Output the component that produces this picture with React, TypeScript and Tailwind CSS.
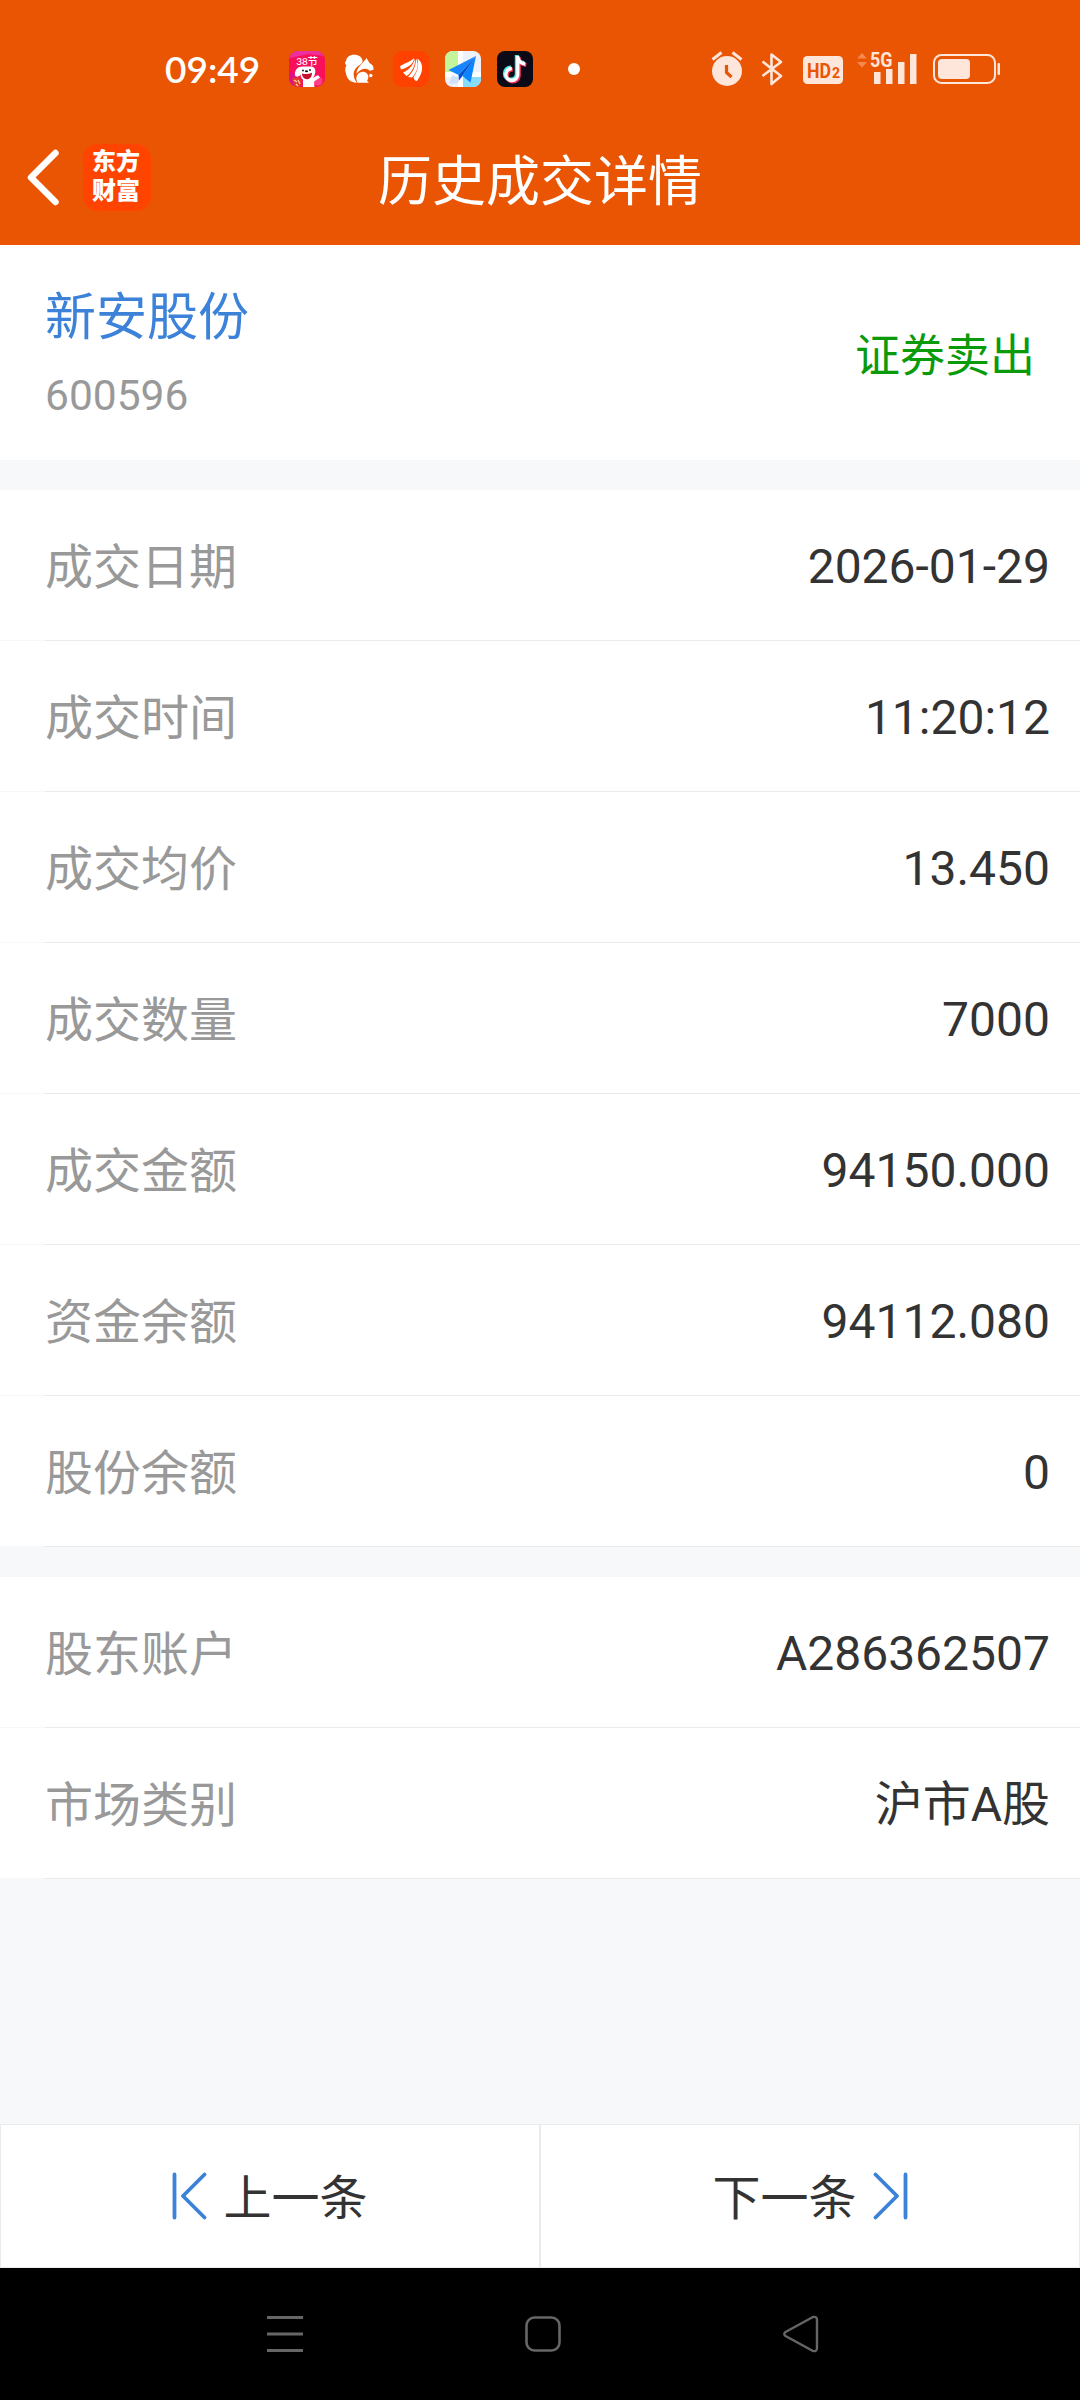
import type { ReactNode } from 'react'

interface DetailItem {
  label: string
  value: string
}

const TRADE: DetailItem[] = [
  { label: '成交日期', value: '2026-01-29' },
  { label: '成交时间', value: '11:20:12' },
  { label: '成交均价', value: '13.450' },
  { label: '成交数量', value: '7000' },
  { label: '成交金额', value: '94150.000' },
  { label: '资金余额', value: '94112.080' },
  { label: '股份余额', value: '0' },
]

const ACCOUNT: DetailItem[] = [
  { label: '股东账户', value: 'A286362507' },
  { label: '市场类别', value: '沪市A股' },
]

function AppTile({ children }: { children: ReactNode }) {
  return (
    <svg aria-hidden className="size-9 shrink-0" viewBox="0 0 36 36">
      {children}
    </svg>
  )
}

function NotificationIcons() {
  return (
    <div className="flex items-center gap-4">
      {/* shopping mascot */}
      <AppTile>
        <defs>
          <clipPath id="mascot">
            <rect width="36" height="36" rx="9" />
          </clipPath>
        </defs>
        <g clipPath="url(#mascot)">
          <rect width="36" height="36" fill="#f8105c" />
          <path d="M0 0h36v5L20 3 0 7z" fill="#ee2fa0" />
          <path d="M0 20l6 4v12H0z" fill="#d9108f" />
          <circle cx="29" cy="30" r="4.5" fill="#ff3f88" />
          <path d="M7 19c1-2.5 4-3.500 7-3.500h8c3 .3 4.500 2 4.300 5-.1 3-1 5-2.800 6.500L29 24l2 2.500-6 4 .5 6H14v-8c-1.500-1-2.300-2.500-2.500-5C10 26 6.500 26.500 6 24c-.3-1.800 0-3.500 1-5z" fill="#fff" />
          <path d="M13 22.500c3.500 1 7 .7 10-.8 0 4-2 6.500-5 6.500s-5-2.500-5-5.700z" fill="#c3122f" />
          <circle cx="14" cy="19.500" r="1" fill="#222" />
          <circle cx="21" cy="19" r="1" fill="#222" />
          <ellipse cx="17.500" cy="20.300" rx="1.600" ry="1" fill="#111" />
          <path d="M3 27l7-1 3 4-2 6H5z" fill="#e2382d" />
          <path d="M5 29l3 2m1-2l2 4m-4 0l2 2" stroke="#ffd3a0" strokeWidth="1.300" />
        </g>
        <text x="18" y="14" textAnchor="middle" fontSize="10" fontWeight="500" fill="#fff" fontFamily="Lato, 'Noto Sans CJK SC', sans-serif">
          38节
        </text>
      </AppTile>
      {/* squirrel */}
      <AppTile>
        <path d="M13 3.800c5 0 8.500 2.700 8.500 6 0 3.400-3.500 4.200-6 6.700-2.500 2.400-3.500 5.500-2.500 9.500.5 2 1.300 4 3 5.700-6.500 0-10-3.700-11-9.200C4 19.500 3.800 16.500 5.500 14.500 3.500 12.500 3.800 11 5 10 5.500 6.500 8.500 3.800 13 3.800z" fill="#fff" />
        <path d="M25.500 7l3 5c3 1.500 4.500 3.800 4 6.800l-3.500 1c-3.500-3.500-9-2.800-13.500 2.700C15.500 16.500 21.500 13 25.500 7z" fill="#fff" />
        <path d="M16.500 31.800c-1.500-3-1.700-6 .2-8.600 2.300-3 6.500-3.400 9-1 2.300 2.300 2 5.300.3 7.300l1.800 2.300z" fill="#fff" />
        <circle cx="29.800" cy="24.500" r="1.700" fill="#fff" />
      </AppTile>
      {/* broker wing */}
      <AppTile>
        <rect width="36" height="36" rx="9" fill="#ff4200" />
        <path d="M7 15.500C11 12 16 12 21 7c0 5-5 9.500-13 11.500z" fill="#fff" />
        <path d="M10 21.500C15 19.500 20 15 22 7.500 23 14 18.500 22 13.500 25z" fill="#fff" />
        <path d="M15 26c5-5 8-11 8-18.500 3.500 6 1.500 13.500-4 19z" fill="#fff" />
        <path d="M24.500 7.500C29 11 30 16 28.500 21c-.8 3-2.500 6-4.500 9-2 0-3-1.500-3.500-4 4-5 5.500-11 4-18.500z" fill="#fff" />
      </AppTile>
      {/* maps */}
      <AppTile>
        <defs>
          <clipPath id="maps">
            <rect width="36" height="36" rx="8" />
          </clipPath>
        </defs>
        <g clipPath="url(#maps)">
          <rect width="36" height="36" fill="#eef2f8" />
          <path d="M0 0h13v21H0z" fill="#c5f59b" />
          <path d="M18 26h18v10H18z" fill="#86dcfa" />
          <path d="M13 0h5v36h-5zM0 21h36v5H0z" fill="#fff" />
          <path d="M7 24l8 3-2 5-9 1z" fill="#c3d8fa" opacity=".7" />
        </g>
        <path d="M31 5L3.500 19l10 5z" fill="#1786ff" />
        <path d="M31 5l-5.500 26.500-8-6.500z" fill="#0a84ff" />
        <path d="M31 5L13.500 24l.5 5.500 3.500-4.500z" fill="#0554cf" />
      </AppTile>
      {/* short video */}
      <AppTile>
        <rect width="36" height="36" rx="8" fill="#0b0a16" />
        <g fill="none" strokeWidth="4">
          <path d="M19.800 4v18.500a6 6 0 1 1-6-6M19.800 5c.5 4 3 6.500 7.500 7" stroke="#4be8e6" />
          <path d="M21.800 6v18.500a6 6 0 1 1-6-6M21.800 7c.5 4 3 6.500 7.500 7" stroke="#f5335c" />
          <path d="M20.800 5v18.500a6 6 0 1 1-6-6M20.800 6c.5 4 3 6.500 7.500 7" stroke="#fff" strokeWidth="3.300" />
        </g>
      </AppTile>
    </div>
  )
}

function SystemIcons() {
  return (
    <div className="flex items-center text-[#ffe6da]">
      <svg aria-hidden className="h-10 w-8" viewBox="0 0 32 40">
        <circle cx="16" cy="22" r="15" fill="currentColor" />
        <path d="M1.500 10.500l9-7M30.500 10.500l-9-7" stroke="currentColor" strokeWidth="3" />
        <path d="M15.500 16v7.500l5 4.500" fill="none" stroke="#ea5504" strokeWidth="3.200" />
      </svg>
      <svg aria-hidden className="ml-[17px] h-10 w-6" viewBox="0 0 24 40">
        <path d="M2.500 12.500L21 27l-9.500 8V5.500L21 13 2.500 27" fill="none" stroke="currentColor" strokeWidth="2.600" strokeLinejoin="round" />
      </svg>
      <svg aria-hidden className="ml-[19px] h-10 w-10" viewBox="0 0 40 40">
        <rect y="7" width="40" height="28" rx="4.500" fill="currentColor" />
        <text x="4" y="28.500" fontSize="21" fontWeight="700" fill="#ea5504" textLength="24" lengthAdjust="spacingAndGlyphs" fontFamily="Roboto, sans-serif">
          HD
        </text>
        <text x="29" y="29" fontSize="14" fontWeight="700" fill="#ea5504" fontFamily="Roboto, sans-serif">
          2
        </text>
      </svg>
      <svg aria-hidden className="ml-3 h-10 w-[62px]" viewBox="0 0 62 40">
        <path d="M2 9.500l5-5.500 5 5.500zM2 13h10l-5 5.500z" fill="#f6884f" />
        <text x="15" y="18" fontSize="21" fontWeight="700" fill="currentColor" textLength="22.500" lengthAdjust="spacingAndGlyphs" fontFamily="Roboto, sans-serif">
          5G
        </text>
        <path d="M19 23h6.500v12H19zM31 20h6.500v15H31zM43 13h6.500v22H43zM55 5h6.500v30H55z" fill="currentColor" />
      </svg>
      <svg aria-hidden className="ml-4 h-10 w-[68px]" viewBox="0 0 68 40">
        <rect x="1" y="6" width="61" height="28" rx="7.500" fill="none" stroke="currentColor" strokeWidth="2" />
        <rect x="5" y="10" width="32" height="20" rx="4" fill="currentColor" />
        <rect x="64.500" y="14" width="2.500" height="12" rx="1" fill="currentColor" />
      </svg>
    </div>
  )
}

function StatusBar() {
  return (
    <div className="flex h-[138px] items-center pl-[165px] pr-[79px]">
      <span className="w-[124px] whitespace-nowrap pb-0.5 font-[Lato,sans-serif] text-[37px] font-semibold leading-none text-white">09:49</span>
      <NotificationIcons />
      <span className="ml-[35px] size-3 rounded-full bg-white" />
      <div className="ml-auto">
        <SystemIcons />
      </div>
    </div>
  )
}

function TitleBar() {
  return (
    <div className="grid h-[107px] grid-cols-[1fr_auto_1fr] items-start">
      <div className="flex items-center gap-[23px] pl-[24px] pt-1.5">
        <button type="button" aria-label="返回">
          <svg className="h-[60px] w-9" viewBox="0 0 36 60">
            <path d="M31.500 5L7 29.500 31.500 54" fill="none" stroke="#fff" strokeWidth="6.500" strokeLinecap="round" strokeLinejoin="round" />
          </svg>
        </button>
        <div className="flex h-[67px] w-[68px] flex-col items-center justify-center rounded-[15px] bg-[#ff4400] pb-0.5 pr-0.5 text-[24px] font-black leading-[29px] text-white">
          <span>东方</span>
          <span>财富</span>
        </div>
      </div>
      <h1 className="pt-[18px] text-[54px] leading-[54px] text-white">历史成交详情</h1>
    </div>
  )
}

function DetailList({ items }: { items: DetailItem[] }) {
  return (
    <dl>
      {items.map((item) => (
        <div key={item.label}>
          <div className="flex h-[150px] items-center justify-between bg-white pl-[45px] pr-[30px] text-[48px]">
            <dt className="pt-1.5 text-[#999]">{item.label}</dt>
            <dd className="pt-1 text-[#333]">{item.value}</dd>
          </div>
          <div className="ml-[45px] h-px bg-[#ebebeb]" />
        </div>
      ))}
    </dl>
  )
}

function StepIcon({ flip }: { flip?: boolean }) {
  return (
    <svg aria-hidden className={flip ? 'h-12 w-9 -scale-x-100' : 'h-12 w-9'} viewBox="0 0 36 48">
      <path d="M2.500 2.500v43M32.500 2.500L11 24l21.500 21.500" fill="none" stroke="#3b82d8" strokeWidth="3.800" strokeLinecap="round" strokeLinejoin="round" />
    </svg>
  )
}

function Pager() {
  return (
    <div className="grid h-36 grid-cols-2 text-[48px] text-[#333]">
      <button type="button" className="flex items-center justify-center gap-[15px] border border-[#ebebeb] bg-white">
        <StepIcon />
        <span className="pt-1.5">上一条</span>
      </button>
      <button type="button" className="flex items-center justify-center gap-[15px] border border-[#ebebeb] bg-white">
        <span className="pt-1.5">下一条</span>
        <StepIcon flip />
      </button>
    </div>
  )
}

function SystemNav() {
  return (
    <nav className="flex h-[132px] items-center bg-black pl-[265px] text-[#666]">
      <svg aria-hidden className="size-10" viewBox="0 0 40 40">
        <path d="M2 3.500h36M2 20h36M2 36.500h36" stroke="currentColor" strokeWidth="3" />
      </svg>
      <svg aria-hidden className="ml-[218px] size-10" viewBox="0 0 40 40">
        <rect x="3.500" y="3.500" width="33" height="33" rx="8" fill="none" stroke="currentColor" strokeWidth="2.600" />
      </svg>
      <svg aria-hidden className="ml-[218px] size-10" viewBox="0 0 40 40">
        <path d="M4.500 18L31.500 3.200Q36 2 36 6v28Q36 38 31.500 36.800L4.500 22Q2 20 4.500 18z" fill="none" stroke="currentColor" strokeWidth="2.400" strokeLinejoin="round" />
      </svg>
    </nav>
  )
}

export default function App() {
  return (
    <div lang="zh-CN" className="flex h-[2400px] w-[1080px] flex-col bg-[#f7f8fa] font-[Roboto,'Noto_Sans_CJK_SC',sans-serif]">
      <header className="h-[245px] bg-[#ea5504]">
        <StatusBar />
        <TitleBar />
      </header>

      <section className="flex h-[215px] items-center justify-between bg-white px-[45px] pt-[7px]">
        <div>
          <h2 className="text-[51px] leading-[60px] text-[#3b82d8]">新安股份</h2>
          <p className="mt-5 text-[42.5px] leading-[56px] text-[#999]">600596</p>
        </div>
        <span className="text-[45px] leading-none text-[#0a9a0a]">证券卖出</span>
      </section>

      <main className="mt-[30px] flex flex-1 flex-col gap-[30px]">
        <DetailList items={TRADE} />
        <DetailList items={ACCOUNT} />
      </main>

      <Pager />
      <SystemNav />
    </div>
  )
}
